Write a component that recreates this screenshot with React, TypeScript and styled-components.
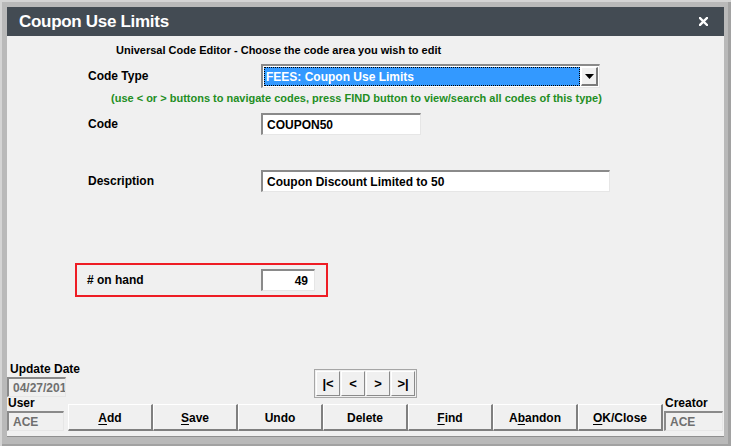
import React from 'react';
import styled, { createGlobalStyle } from 'styled-components';

const GlobalStyle = createGlobalStyle`
	html, body {
		margin: 0;
		padding: 0;
		background: #b9b9b9;
	}
	body {
		font-family: "Liberation Sans", Arial, sans-serif;
	}
	* {
		box-sizing: border-box;
	}
`;

const faceColor = '#f0f0f0';
const fieldFont = 'bold 12px "Liberation Sans", Arial, sans-serif';

const Window = styled.div`
	width: 731px;
	height: 446px;
	display: flex;
	flex-direction: column;
	padding: 7px 7px 9px 7px;
	background: #b9b9b9;
	box-shadow: inset 2px 2px 0 #d4d4d4, inset -3px -2px 0 #a2a2a2;
`;

const TitleBar = styled.div`
	flex: none;
	height: 29px;
	display: flex;
	align-items: center;
	justify-content: space-between;
	padding: 0 16px 0 12px;
	background: #434b53;
	color: #fff;
`;

const Title = styled.div`
	font-size: 17px;
	font-weight: bold;
	letter-spacing: -0.3px;
`;

const CloseIcon = () => (
	<svg width="9" height="9" viewBox="0 0 9 9">
		<path d="M1 1 L8 8 M8 1 L1 8" stroke="#fff" strokeWidth="2.4" strokeLinecap="square" />
	</svg>
);

const Body = styled.div`
	flex: 1;
	display: flex;
	flex-direction: column;
	background: ${faceColor};
	border-bottom: 1px solid #8f8f8f;
`;

const Heading = styled.div`
	padding: 7px 0 0 109px;
	font-size: 11px;
	line-height: 14px;
	font-weight: bold;
	color: #000;
`;

const Form = styled.div`
	display: flex;
	flex-direction: column;
	padding-left: 81px;
`;

const Row = styled.div<{ $top: number }>`
	display: flex;
	align-items: center;
	margin-top: ${(p) => p.$top}px;
`;

const Label = styled.div<{ $width?: number }>`
	width: ${(p) => p.$width ?? 173}px;
	flex: none;
	font-size: 12px;
	font-weight: bold;
	color: #000;
`;

const Field = styled.div<{ $width: number; $height?: number; $align?: string; $readOnly?: boolean }>`
	width: ${(p) => p.$width}px;
	height: ${(p) => p.$height ?? 22}px;
	flex: none;
	display: flex;
	align-items: center;
	justify-content: ${(p) => (p.$align === 'right' ? 'flex-end' : 'flex-start')};
	padding: 0 ${(p) => (p.$align === 'right' ? 6 : 2)}px 0 4px;
	overflow: hidden;
	white-space: nowrap;
	background: ${(p) => (p.$readOnly ? faceColor : '#fff')};
	border-top: 2px solid #8a8a8a;
	border-left: 2px solid #8a8a8a;
	border-bottom: 1px solid #e6e6e6;
	border-right: 1px solid #e6e6e6;
	font: ${fieldFont};
	color: ${(p) => (p.$readOnly ? '#6f6f6f' : '#000')};
`;

const Select = styled.div`
	width: 339px;
	height: 24px;
	display: flex;
	align-items: stretch;
	padding: 1px;
	background: #fff;
	border-top: 2px solid #8a8a8a;
	border-left: 2px solid #8a8a8a;
	border-bottom: 1px solid #e6e6e6;
	border-right: 1px solid #e6e6e6;
`;

const SelectValue = styled.div`
	flex: 1;
	display: flex;
	align-items: center;
	padding-left: 2px;
	background: #3399ff;
	outline: 1px dotted #000;
	outline-offset: -1px;
	font: ${fieldFont};
	color: #fff;
`;

const DropButton = styled.div`
	width: 17px;
	margin-left: 1px;
	display: flex;
	align-items: center;
	justify-content: center;
	background: ${faceColor};
	border-top: 1px solid #fff;
	border-left: 1px solid #fff;
	border-right: 2px solid #7a7a7a;
	border-bottom: 2px solid #7a7a7a;
`;

const DropArrow = () => (
	<svg width="9" height="5" viewBox="0 0 9 5">
		<path d="M0 0 H9 L4.5 5 Z" fill="#000" />
	</svg>
);

const Hint = styled.div`
	margin: 4px 0 0 23px;
	font-size: 11px;
	line-height: 13px;
	font-weight: bold;
	color: #238e23;
`;

const Highlight = styled.div`
	width: 253px;
	height: 34px;
	display: flex;
	align-items: center;
	margin: 71px 0 0 68px;
	padding-left: 10px;
	border: 2px solid #ee1c24;
`;

const Footer = styled.div`
	margin-top: auto;
	display: grid;
	grid-template-columns: 61px 595px 61px;
	grid-template-rows: 36px 34px;
	padding-bottom: 5px;
`;

const Stack = styled.div<{ $pad?: number }>`
	display: flex;
	flex-direction: column;
	justify-content: flex-end;
	padding-left: ${(p) => p.$pad ?? 0}px;
	min-width: 0;
`;

const SmallLabel = styled.div<{ $indent?: number }>`
	font-size: 12px;
	line-height: 14px;
	font-weight: bold;
	white-space: nowrap;
	color: #000;
	padding-left: ${(p) => p.$indent ?? 0}px;
	margin-bottom: 1px;
`;

const NavCell = styled.div`
	display: flex;
	align-items: flex-end;
	justify-content: center;
`;

const NavGroup = styled.div`
	display: flex;
	gap: 1px;
	padding: 1px;
	border: 1px solid #a6a6a6;
	background: ${faceColor};
	margin-bottom: -1px;
`;

const NavButton = styled.div`
	width: 24px;
	height: 25px;
	display: flex;
	align-items: center;
	justify-content: center;
	background: ${faceColor};
	border-top: 1px solid #fff;
	border-left: 1px solid #fff;
	border-right: 1px solid #8a8a8a;
	border-bottom: 1px solid #8a8a8a;
	font: bold 13px "Liberation Sans", Arial, sans-serif;
	color: #000;
`;

const ButtonRow = styled.div`
	display: flex;
	align-items: flex-end;
`;

const Button = styled.div`
	width: 85px;
	height: 27px;
	display: flex;
	align-items: center;
	justify-content: center;
	padding-top: 1px;
	background: ${faceColor};
	border-top: 1px solid #fff;
	border-left: 1px solid #fff;
	border-right: 2px solid #7f7f7f;
	border-bottom: 2px solid #7f7f7f;
	font: bold 12px "Liberation Sans", Arial, sans-serif;
	color: #000;
`;

const Key = styled.span`
	text-decoration: underline;
	text-underline-offset: 2px;
`;

const buttons: { label: string; key?: number }[] = [
	{ label: 'Add', key: 0 },
	{ label: 'Save', key: 0 },
	{ label: 'Undo' },
	{ label: 'Delete' },
	{ label: 'Find', key: 0 },
	{ label: 'Abandon', key: 1 },
	{ label: 'OK/Close', key: 0 },
];

const ButtonLabel: React.FC<{ label: string; index?: number }> = ({ label, index }) => {
	if (index === undefined) return <>{label}</>;
	return (
		<>
			{label.slice(0, index)}
			<Key>{label[index]}</Key>
			{label.slice(index + 1)}
		</>
	);
};

export default function App() {
	return (
		<>
			<GlobalStyle />
			<Window>
				<TitleBar>
					<Title>Coupon Use Limits</Title>
					<CloseIcon />
				</TitleBar>
				<Body>
					<Heading>Universal Code Editor - Choose the code area you wish to edit</Heading>
					<Form>
						<Row $top={7}>
							<Label>Code Type</Label>
							<Select>
								<SelectValue>FEES: Coupon Use Limits</SelectValue>
								<DropButton>
									<DropArrow />
								</DropButton>
							</Select>
						</Row>
						<Hint>(use &lt; or &gt; buttons to navigate codes, press FIND button to view/search all codes of this type)</Hint>
						<Row $top={8}>
							<Label>Code</Label>
							<Field $width={160}>COUPON50</Field>
						</Row>
						<Row $top={35}>
							<Label>Description</Label>
							<Field $width={349}>Coupon Discount Limited to 50</Field>
						</Row>
					</Form>
					<Highlight>
						<Label $width={174}># on hand</Label>
						<Field $width={54} $align="right">49</Field>
					</Highlight>
					<Footer>
						<Stack>
							<SmallLabel $indent={3}>Update Date</SmallLabel>
							<Field $width={59} $height={20} $readOnly>04/27/201</Field>
						</Stack>
						<NavCell>
							<NavGroup>
								<NavButton>|&lt;</NavButton>
								<NavButton>&lt;</NavButton>
								<NavButton>&gt;</NavButton>
								<NavButton>&gt;|</NavButton>
							</NavGroup>
						</NavCell>
						<div />
						<Stack>
							<SmallLabel $indent={1}>User</SmallLabel>
							<Field $width={57} $height={20} $readOnly>ACE</Field>
						</Stack>
						<ButtonRow>
							{buttons.map((b) => (
								<Button key={b.label}>
									<ButtonLabel label={b.label} index={b.key} />
								</Button>
							))}
						</ButtonRow>
						<Stack $pad={1}>
							<SmallLabel $indent={1}>Creator</SmallLabel>
							<Field $width={59} $height={20} $readOnly>ACE</Field>
						</Stack>
					</Footer>
				</Body>
			</Window>
		</>
	);
}
